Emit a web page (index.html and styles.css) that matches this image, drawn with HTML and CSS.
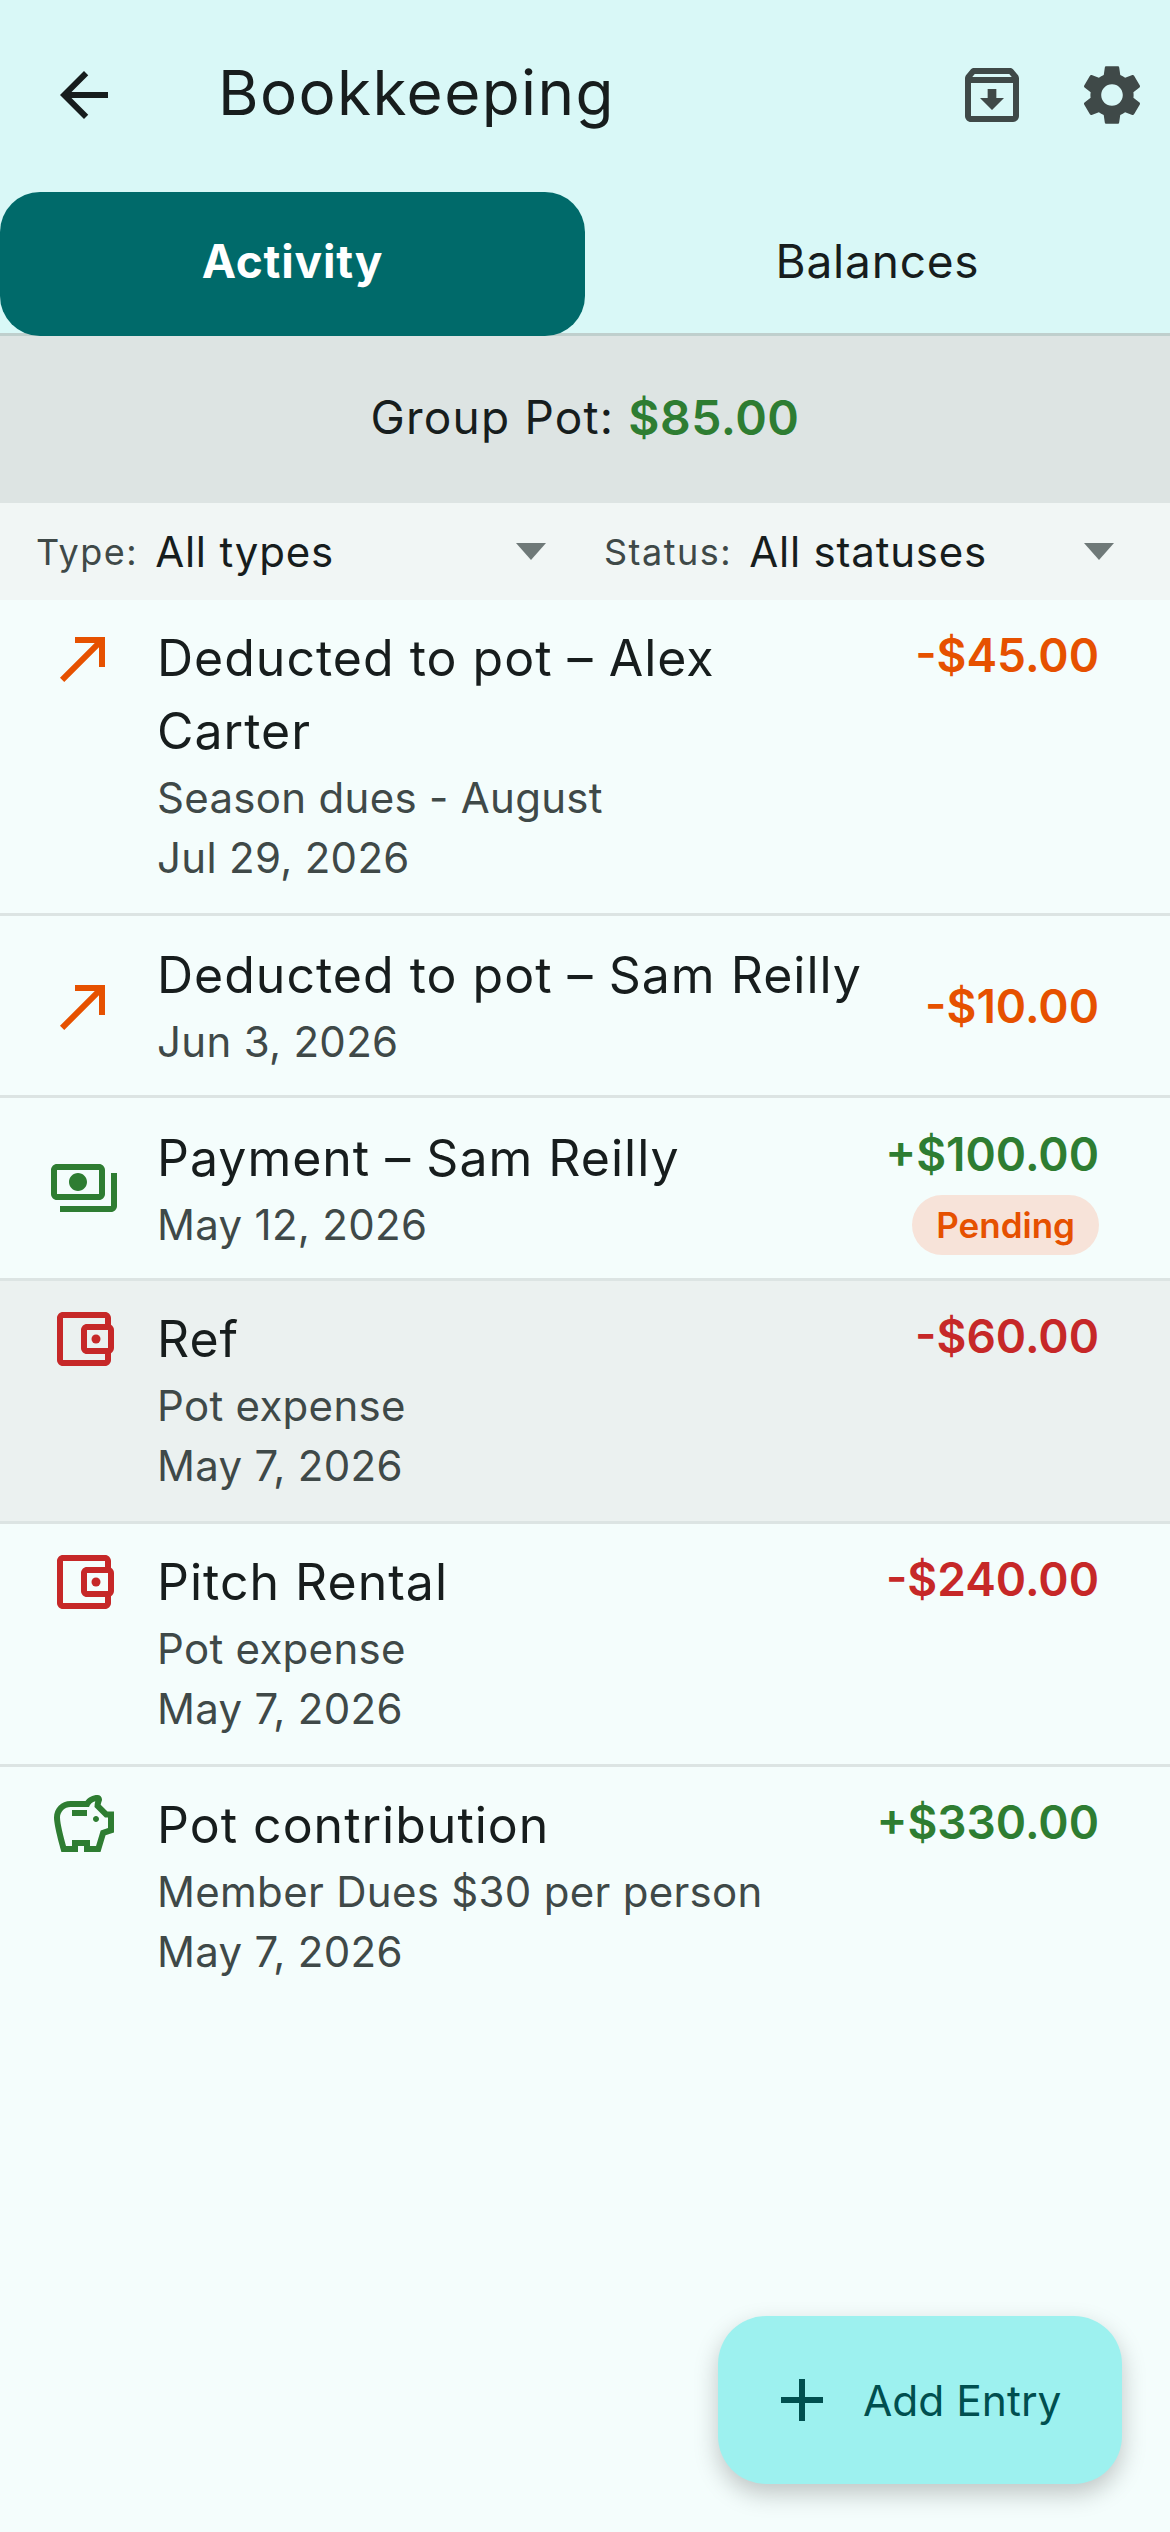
FILE: index.html
```html
<!DOCTYPE html>
<html lang="en">

<head>
    <meta charset="UTF-8" />
    <meta name="viewport" content="width=device-width, initial-scale=1.0" />
    <title>Bookkeeping</title>
    <link rel="stylesheet" href="styles.css">
</head>

<body>
    <div class="app">
        <div class="topbar">
            <svg class="icon back" viewBox="0 0 24 24"><path d="M20 11H7.83l5.59-5.59L12 4l-8 8 8 8 1.41-1.41L7.83 13H20v-2z"/></svg>
            <h1 class="title">Bookkeeping</h1>
            <svg class="icon action" viewBox="0 0 24 24"><path d="M20.54 5.23l-1.39-1.68C18.88 3.21 18.47 3 18 3H6c-.47 0-.88.21-1.16.55L3.46 5.23C3.17 5.57 3 6.02 3 6.5V19c0 1.1.9 2 2 2h14c1.1 0 2-.9 2-2V6.5c0-.48-.17-.93-.46-1.27zM6.24 5h11.52l.83 1H5.42l.82-1zM5 19V8h14v11H5zm8.45-9h-2.9v3H8l4 4 4-4h-2.55z"/></svg>
            <svg class="icon action" viewBox="0 0 24 24"><path d="M19.14 12.94c.04-.3.06-.61.06-.94 0-.32-.02-.64-.07-.94l2.03-1.58c.18-.14.23-.41.12-.61l-1.92-3.32c-.12-.22-.37-.29-.59-.22l-2.39.96c-.5-.38-1.03-.7-1.62-.94l-.36-2.54c-.04-.24-.24-.41-.48-.41h-3.84c-.24 0-.43.17-.47.41l-.36 2.54c-.59.24-1.13.57-1.62.94l-2.39-.96c-.22-.08-.47 0-.59.22L2.74 8.87c-.12.21-.08.47.12.61l2.03 1.58c-.05.3-.09.63-.09.94s.02.64.07.94l-2.03 1.58c-.18.14-.23.41-.12.61l1.92 3.32c.12.22.37.29.59.22l2.39-.96c.5.38 1.03.7 1.62.94l.36 2.54c.05.24.24.41.48.41h3.84c.24 0 .44-.17.47-.41l.36-2.54c.59-.24 1.13-.56 1.62-.94l2.39.96c.22.08.47 0 .59-.22l1.92-3.32c.12-.22.07-.47-.12-.61l-2.01-1.58zM12 15.6c-1.98 0-3.6-1.62-3.6-3.6s1.62-3.6 3.6-3.6 3.6 1.62 3.6 3.6-1.62 3.6-3.6 3.6z"/></svg>
        </div>

        <div class="tabs">
            <div class="tab active">Activity</div>
            <div class="tab">Balances</div>
        </div>

        <div class="pot"><span>Group Pot:</span> <span class="pos pot-value">$85.00</span></div>

        <div class="filters">
            <div class="filter">
                <span class="filter-label">Type:</span>
                <span class="filter-value">All types</span>
                <span class="caret"></span>
            </div>
            <div class="filter">
                <span class="filter-label">Status:</span>
                <span class="filter-value">All statuses</span>
                <span class="caret"></span>
            </div>
        </div>

        <div class="list">
            <div class="row">
                <svg class="icon orange" viewBox="0 0 24 24"><path d="M9 5v2h6.59L4 18.59 5.41 20 17 8.41V15h2V5z"/></svg>
                <div class="info">
                    <div class="name">Deducted to pot – Alex Carter</div>
                    <div class="sub">Season dues - August</div>
                    <div class="sub">Jul 29, 2026</div>
                </div>
                <div class="side"><div class="amount orange">-$45.00</div></div>
            </div>

            <div class="row center">
                <svg class="icon orange" viewBox="0 0 24 24"><path d="M9 5v2h6.59L4 18.59 5.41 20 17 8.41V15h2V5z"/></svg>
                <div class="info">
                    <div class="name">Deducted to pot – Sam Reilly</div>
                    <div class="sub">Jun 3, 2026</div>
                </div>
                <div class="side"><div class="amount orange">-$10.00</div></div>
            </div>

            <div class="row center">
                <svg class="icon pos" viewBox="0 0 24 24"><path d="M19 14V6c0-1.1-.9-2-2-2H3c-1.1 0-2 .9-2 2v8c0 1.1.9 2 2 2h14c1.1 0 2-.9 2-2zm-2 0H3V6h14v8zm-7-7c-1.66 0-3 1.34-3 3s1.34 3 3 3 3-1.34 3-3-1.34-3-3-3zm13 0v11c0 1.1-.9 2-2 2H4v-2h17V7h2z"/></svg>
                <div class="info">
                    <div class="name">Payment – Sam Reilly</div>
                    <div class="sub">May 12, 2026</div>
                </div>
                <div class="side">
                    <div class="amount pos">+$100.00</div>
                    <div class="pill">Pending</div>
                </div>
            </div>

            <div class="row shaded">
                <svg class="icon neg" viewBox="0 0 24 24"><path d="M21 7.28V5c0-1.1-.9-2-2-2H5c-1.11 0-2 .9-2 2v14c0 1.1.89 2 2 2h14c1.1 0 2-.9 2-2v-2.28c.59-.35 1-.98 1-1.72V9c0-.74-.41-1.38-1-1.72zM20 9v6h-7V9h7zM5 19V5h14v2h-6c-1.1 0-2 .9-2 2v6c0 1.1.9 2 2 2h6v2H5z"/><circle cx="16" cy="12" r="1.5"/></svg>
                <div class="info">
                    <div class="name">Ref</div>
                    <div class="sub">Pot expense</div>
                    <div class="sub">May 7, 2026</div>
                </div>
                <div class="side"><div class="amount neg">-$60.00</div></div>
            </div>

            <div class="row">
                <svg class="icon neg" viewBox="0 0 24 24"><path d="M21 7.28V5c0-1.1-.9-2-2-2H5c-1.11 0-2 .9-2 2v14c0 1.1.89 2 2 2h14c1.1 0 2-.9 2-2v-2.28c.59-.35 1-.98 1-1.72V9c0-.74-.41-1.38-1-1.72zM20 9v6h-7V9h7zM5 19V5h14v2h-6c-1.1 0-2 .9-2 2v6c0 1.1.9 2 2 2h6v2H5z"/><circle cx="16" cy="12" r="1.5"/></svg>
                <div class="info">
                    <div class="name">Pitch Rental</div>
                    <div class="sub">Pot expense</div>
                    <div class="sub">May 7, 2026</div>
                </div>
                <div class="side"><div class="amount neg">-$240.00</div></div>
            </div>

            <div class="row last">
                <svg class="icon pos" viewBox="0 0 24 24"><path d="M15 10c0-.55.45-1 1-1s1 .45 1 1-.45 1-1 1-1-.45-1-1zM8 9h5V7H8v2zm14-1.5v6.97l-2.82.94L17.5 21H12v-2h-2v2H4.5S2 12.54 2 9.5 4.46 4 7.5 4h5c.91-1.21 2.36-2 4-2 .83 0 1.5.67 1.5 1.5 0 .21-.04.4-.12.58-.14.34-.26.73-.32 1.15l2.27 2.27H22zm-2 2h-1L15.5 6c0-.65.09-1.29.26-1.91-.97.25-1.76.97-2.09 1.91H7.5C5.57 6 4 7.57 4 9.5c0 1.88 1.22 6.65 2.01 9.5H8v-2h6v2h2.01l1.55-5.15 2.44-.82V9.5z"/></svg>
                <div class="info">
                    <div class="name">Pot contribution</div>
                    <div class="sub">Member Dues $30 per person</div>
                    <div class="sub">May 7, 2026</div>
                </div>
                <div class="side"><div class="amount pos">+$330.00</div></div>
            </div>
        </div>

        <div class="fab">
            <svg class="icon" viewBox="0 0 24 24"><path d="M19 13h-6v6h-2v-6H5v-2h6V5h2v6h6v2z"/></svg>
            <span>Add Entry</span>
        </div>
    </div>
</body>

</html>
```

FILE: styles.css
```css
* {
    box-sizing: border-box;
}

html, body {
    margin: 0;
    padding: 0;
}

body {
    font-family: "Inter", "Roboto", sans-serif;
    color: #171d1d;
    background-color: #f4fdfc;
}

.app {
    position: relative;
    width: 1170px;
    height: 2532px;
    overflow: hidden;
}

.icon {
    flex: none;
    width: 72px;
    height: 72px;
    fill: currentColor;
}

.orange { color: #e65100; }
.pos { color: #2e7d32; }
.neg { color: #c62828; }

/* top bar */
.topbar {
    display: flex;
    align-items: center;
    height: 192px;
    padding: 0 22px 2px 48px;
    column-gap: 48px;
    background-color: #d9f8f7;
}

.back {
    color: #171d1d;
}

.title {
    flex: 1;
    margin: 0 0 6px 50px;
    font-size: 62px;
    font-weight: 400;
    letter-spacing: 1.4px;
}

.action {
    color: #3f4948;
}

/* tabs */
.tabs {
    display: flex;
    height: 144px;
    background-color: #d9f8f7;
    border-bottom: 3px solid #bfcfcd;
}

.tab {
    display: flex;
    flex: 1;
    align-items: center;
    justify-content: center;
    height: 144px;
    padding-bottom: 6px;
    font-size: 46px;
    letter-spacing: 0.8px;
}

.tab.active {
    color: #fff;
    font-weight: 700;
    background-color: #006a6a;
    border-radius: 40px;
}

/* pot summary */
.pot {
    display: flex;
    align-items: center;
    justify-content: center;
    column-gap: 14px;
    height: 167px;
    padding-bottom: 5px;
    font-size: 46px;
    letter-spacing: 1.2px;
    background-color: #dde4e3;
}

.pot-value {
    font-size: 48px;
    font-weight: 600;
    letter-spacing: 0.5px;
}

/* filters */
.filters {
    display: flex;
    height: 97px;
    padding: 0 32px 0 36px;
    background-color: #f1f6f5;
}

.filter {
    display: flex;
    flex: 1;
    align-items: center;
}

.filter + .filter {
    padding-left: 34px;
}

.filter-label {
    margin-right: 17px;
    font-size: 36px;
    letter-spacing: 1.5px;
    color: #3f4948;
}

.filter-value {
    flex: 1;
    font-size: 42px;
    letter-spacing: 0.8px;
}

.caret {
    width: 0;
    height: 0;
    margin-right: 24px;
    border-left: 15px solid transparent;
    border-right: 15px solid transparent;
    border-top: 17px solid #6f7978;
}

/* list rows */
.row {
    display: flex;
    align-items: flex-start;
    padding: 22px 71px 25px 48px;
    column-gap: 37px;
    border-bottom: 3px solid #dce4e3;
}

.row.center {
    align-items: center;
    padding-top: 23px;
    padding-bottom: 23px;
}

.row.shaded {
    background-color: #ebf1f0;
}

.row.last {
    border-bottom: none;
}

.info {
    flex: 1;
    min-width: 0;
}

.name {
    font-size: 50px;
    line-height: 73px;
    letter-spacing: 1px;
}

.sub {
    font-size: 42px;
    line-height: 60px;
    letter-spacing: 0.3px;
    color: #3f4948;
}

.side {
    display: flex;
    flex-direction: column;
    align-items: flex-end;
    row-gap: 8px;
    margin-left: 22px;
}

.amount {
    font-size: 46px;
    font-weight: 600;
    line-height: 66px;
}

.pill {
    height: 60px;
    padding: 0 24px;
    font-size: 35px;
    font-weight: 600;
    line-height: 60px;
    color: #e65100;
    background-color: #f7e3d9;
    border-radius: 30px;
}

/* add entry button */
.fab {
    position: absolute;
    top: 2316px;
    left: 718px;
    display: flex;
    align-items: center;
    width: 404px;
    height: 168px;
    padding-left: 48px;
    column-gap: 25px;
    font-size: 42.5px;
    color: #004f4f;
    background-color: #9df1ef;
    border-radius: 48px;
    box-shadow: 0 10px 24px rgba(0, 0, 0, 0.22);
}
```
